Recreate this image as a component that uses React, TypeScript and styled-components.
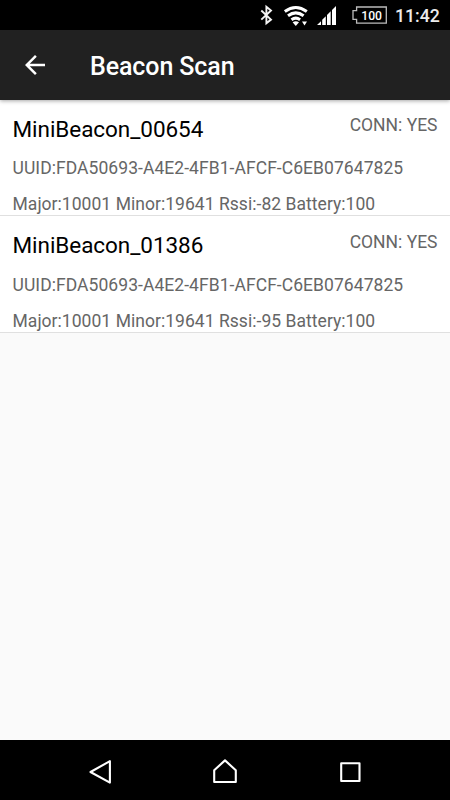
import React from "react";
import styled, { createGlobalStyle } from "styled-components";

const GlobalStyle = createGlobalStyle`
  html, body { margin: 0; padding: 0; background: #fafafa; }
  * { box-sizing: border-box; }
`;

const Screen = styled.div`
  width: 450px;
  height: 800px;
  display: flex;
  flex-direction: column;
  overflow: hidden;
  background: #fafafa;
  font-family: Roboto, "Noto Sans", sans-serif;
`;

const StatusBar = styled.header`
  flex: none;
  height: 30px;
  padding-right: 10px;
  display: flex;
  align-items: center;
  justify-content: flex-end;
  background: #000;
`;

const StatusIcons = styled.svg`
  display: block;
  width: 130px;
  height: 30px;
  margin-right: 5px;
`;

const BatteryText = styled.text`
  font-family: Roboto, sans-serif;
  font-size: 12.2px;
  font-weight: 500;
  fill: #fff;
`;

const Clock = styled.time`
  width: 45px;
  white-space: nowrap;
  font-size: 17.7px;
  line-height: 30px;
  padding-top: 1px;
  font-weight: 500;
  color: #ececec;
`;

const Toolbar = styled.nav`
  flex: none;
  height: 70px;
  padding: 0 20px;
  display: flex;
  align-items: center;
  gap: 40px;
  background: #212121;
  box-shadow: 0 1px 4px rgba(0, 0, 0, 0.35);
  z-index: 1;
`;

const BackButton = styled.button`
  width: 30px;
  height: 30px;
  padding: 0;
  border: 0;
  background: none;
  svg { display: block; }
`;

const Title = styled.h1`
  margin: 0;
  padding-top: 3px;
  font-size: 25px;
  line-height: 30px;
  font-weight: 500;
  letter-spacing: -0.1px;
  color: #fff;
`;

const List = styled.ul`
  flex: 1;
  margin: 0;
  padding: 0;
  list-style: none;
`;

const Row = styled.li`
  height: 116.25px;
  padding: 13px 12.5px 0;
  display: flex;
  flex-direction: column;
  gap: 12px;
  background: #fff;
  border-bottom: 1.25px solid #e0e0e0;
`;

const RowHead = styled.div`
  height: 31px;
  display: flex;
  align-items: flex-start;
  justify-content: space-between;
`;

const Name = styled.h2`
  margin: 0;
  padding-top: 1px;
  font-size: 22.5px;
  line-height: 30px;
  font-weight: 400;
  letter-spacing: -0.05px;
  color: #000;
`;

const Detail = styled.div<{ $tracking?: number }>`
  flex: none;
  height: 24px;
  padding-top: 0.4px;
  font-size: 17.5px;
  line-height: 24px;
  letter-spacing: ${(p) => p.$tracking ?? 0}px;
  white-space: nowrap;
  color: #666;
`;

const NavBar = styled.footer`
  flex: none;
  height: 60px;
  padding: 0 37.5px;
  display: flex;
  background: #000;
`;

const NavButton = styled.button`
  flex: 1;
  padding: 4px 0 0;
  border: 0;
  display: flex;
  align-items: center;
  justify-content: center;
  background: none;
`;

const beacons = [
  { name: "MiniBeacon_00654", rssi: -82 },
  { name: "MiniBeacon_01386", rssi: -95 },
];

const navPaths = [
  "M5.5 15 24.9 4.2V25.6Z",
  "M4.2 25V13.2L15 3.4 25.8 13.2V25Z",
  "M6.2 6.2H24.5V24H6.2Z",
];

export default function App() {
  return (
    <>
      <GlobalStyle />
      <Screen>
        <StatusBar>
          <StatusIcons viewBox="260 0 130 30">
            <path d="M261.3 10.5 271 19.6 266.4 23.2V6.8L271 10.5 261.3 19.6" fill="none" stroke="#f4f4f4" strokeWidth="1.9" />
            <g fill="none" stroke="#fff" strokeWidth="3">
              <path d="M284.8 11.5Q295.8 3.5 306.8 11.5" />
              <path d="M288 15.8Q295.8 10 303.6 15.8" />
              <path d="M291.5 19.7Q295.8 16.6 300.1 19.7" />
            </g>
            <path d="M292.6 22.2Q295.8 20.3 299 22.2L295.8 26Z" fill="#fff" />
            <path d="M302 21.5H307L304.5 25.5Z" fill="#fff" />
            <path d="M317 25 321 21.3V25ZM322.2 25V19.8L325.8 16.2V25ZM327 25V15L330.7 11.2V25ZM332 25V10L336 6V25Z" fill="#fff" />
            <path d="M356.6 7H386.3V23.2H356.6V19.3H353V10.7H356.6Z" fill="none" stroke="#bcbcbc" strokeWidth="1.3" />
            <BatteryText x="371.6" y="19.5" textAnchor="middle">100</BatteryText>
          </StatusIcons>
          <Clock>11:42</Clock>
        </StatusBar>
        <Toolbar>
          <BackButton aria-label="Back">
            <svg width="30" height="30" viewBox="0 0 24 24" fill="#fff">
              <path d="M20 11H7.83l5.59-5.59L12 4l-8 8 8 8 1.41-1.41L7.83 13H20v-2z" />
            </svg>
          </BackButton>
          <Title>Beacon Scan</Title>
        </Toolbar>
        <List>
          {beacons.map((b) => (
            <Row key={b.name}>
              <RowHead>
                <Name>{b.name}</Name>
                <Detail>CONN: YES</Detail>
              </RowHead>
              <Detail $tracking={0.06}>UUID:FDA50693-A4E2-4FB1-AFCF-C6EB07647825</Detail>
              <Detail $tracking={0.04}>Major:10001 Minor:19641 Rssi:{b.rssi} Battery:100</Detail>
            </Row>
          ))}
        </List>
        <NavBar>
          {navPaths.map((d) => (
            <NavButton key={d}>
              <svg width="30" height="30" viewBox="0 0 30 30" fill="none" stroke="#fff" strokeWidth="2.1" strokeLinejoin="round">
                <path d={d} />
              </svg>
            </NavButton>
          ))}
        </NavBar>
      </Screen>
    </>
  );
}
